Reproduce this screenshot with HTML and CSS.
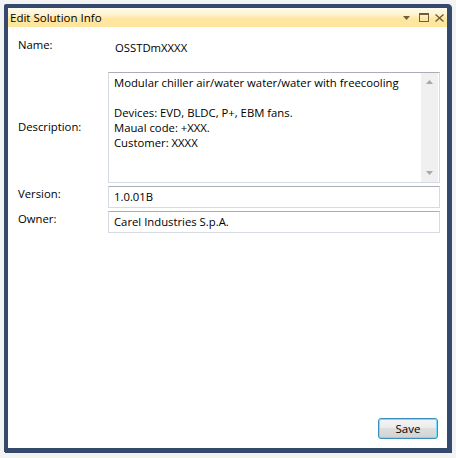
FILE: index.html
```html
<!DOCTYPE html>
<html>
<head>
<meta charset="utf-8">
<link rel="stylesheet" href="styles.css">
</head>
<body>
<div class="window">
  <div class="titlebar">
    <span class="title">Edit Solution Info</span>
    <div class="tools">
      <svg class="ico" width="7" height="4" viewBox="0 0 7 4"><path d="M0 0H7L3.5 4Z" fill="#6e5f38"/></svg>
      <svg class="ico" width="10" height="9" viewBox="0 0 10 9"><rect x="0.5" y="0.5" width="9" height="8" fill="none" stroke="#6e5f38"/><rect x="0" y="0" width="10" height="2" fill="#6e5f38"/></svg>
      <svg class="ico" width="9" height="8" viewBox="0 0 9 8"><path d="M0.5 0.5L8.5 7.5M8.5 0.5L0.5 7.5" stroke="#6e5f38" stroke-width="1.4"/></svg>
    </div>
  </div>
  <div class="body">
    <div class="form">
      <div class="label name-label">Name:</div>
      <div class="value">OSSTDmXXXX</div>

      <div class="label desc-label">Description:</div>
      <div class="box textarea">
        <div class="text">Modular chiller air/water water/water with freecooling<br><br>Devices: EVD, BLDC, P+, EBM fans.<br>Maual code: +XXX.<br>Customer: XXXX</div>
        <div class="scroll">
          <svg width="7" height="4" viewBox="0 0 7 4"><path d="M0 4H7L3.5 0Z" fill="#a8a8a8"/></svg>
          <svg width="7" height="4" viewBox="0 0 7 4"><path d="M0 0H7L3.5 4Z" fill="#a8a8a8"/></svg>
        </div>
      </div>

      <div class="label">Version:</div>
      <div class="box input">1.0.01B</div>

      <div class="label">Owner:</div>
      <div class="box input">Carel Industries S.p.A.</div>
    </div>
    <div class="footer">
      <button class="btn">Save</button>
    </div>
  </div>
</div>
</body>
</html>
```
FILE: styles.css
```css
* { box-sizing: border-box; }
html, body { margin: 0; padding: 0; }
body {
  background: #f3f3f3;
  width: 456px;
  height: 458px;
  font-family: "Open Sans", "Noto Sans", sans-serif;
  font-size: 11.3px;
  color: #000;
}
.window {
  margin: 4px 0 0 4px;
  width: 447px;
  height: 448px;
  border: 4px solid #34496b;
  box-shadow: 1px 1px 0 #34496b;
  border-radius: 2px 3px 0 0;
  background: #fff;
  display: flex;
  flex-direction: column;
}
.titlebar {
  height: 19px;
  flex: none;
  background: linear-gradient(#fffcf0 0%, #fff1c8 40%, #ffe7a1 55%, #ffe69f 100%);
  display: flex;
  align-items: center;
  padding: 0 3px 0 2px;
}
.title {
  flex: 1;
  font-size: 11.5px;
  line-height: 19px;
}
.tools {
  display: flex;
  align-items: center;
  gap: 6px;
}
.tools .ico { display: block; }
.tools .ico:first-child { margin-top: 1px; margin-right: 3px; }
.body {
  flex: 1;
  display: flex;
  flex-direction: column;
  padding: 9px 7px 9px 10px;
}
.form {
  display: grid;
  grid-template-columns: 90px 1fr;
  row-gap: 3px;
  align-items: start;
}
.label {
  line-height: 16px;
  padding-top: 0;
}
.name-label { padding-top: 1px; }
.value {
  padding: 4px 0 0 7px;
  line-height: 16px;
  height: 33px;
}
.desc-label { align-self: center; padding-top: 0; margin-top: -1px; }
.box {
  border: 1px solid #d6dbe1;
  border-top-color: #a9adb4;
  background: #fff;
}
.textarea {
  height: 111px;
  display: flex;
}
.textarea .text {
  flex: 1;
  padding: 2px 5px;
  line-height: 15px;
}
.scroll {
  width: 17px;
  margin: 0 1px 0 0;
  background: #f0f0f0;
  display: flex;
  flex-direction: column;
  justify-content: space-between;
  align-items: center;
  padding: 7px 0 7px;
}
.scroll svg { display: block; }
.input {
  height: 22px;
  line-height: 20px;
  padding: 0 5px;
}
.footer {
  margin-top: auto;
  display: flex;
  justify-content: flex-end;
  padding-right: 2px;
}
.btn {
  width: 60px;
  height: 21px;
  font-family: inherit;
  font-size: 11.5px;
  color: #000;
  padding: 0;
  border: 1px solid #3a8fc0;
  border-radius: 3px;
  background: linear-gradient(#f4f4f4 0%, #ececec 45%, #dedede 50%, #d2d2d2 100%);
  box-shadow: inset 0 0 0 1px #6fe0fa;
}
```
